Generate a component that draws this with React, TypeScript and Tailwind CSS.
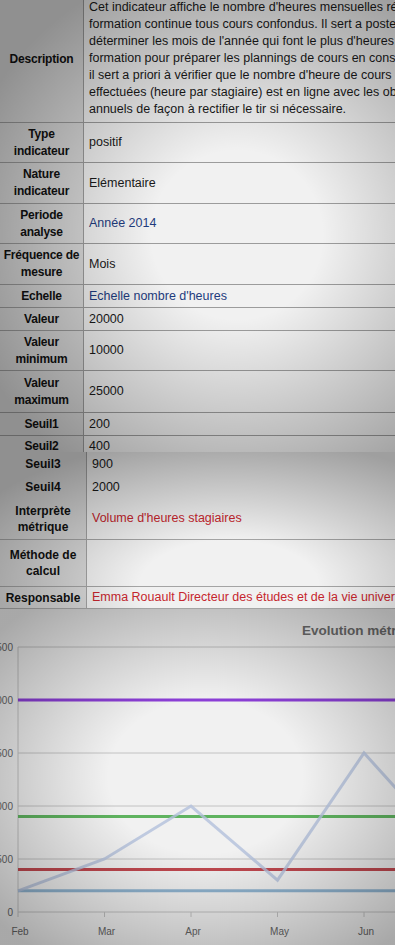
import React from "react";

type Row = { label: string[]; value: string; h: number; tone?: "link" | "red" };

const topRows: Row[] = [
  { label: ["Type", "indicateur"], value: "positif", h: 40 },
  { label: ["Nature", "indicateur"], value: "Elémentaire", h: 41 },
  { label: ["Periode", "analyse"], value: "Année 2014", h: 40, tone: "link" },
  { label: ["Fréquence de", "mesure"], value: "Mois", h: 41 },
  { label: ["Echelle"], value: "Echelle nombre d'heures", h: 23, tone: "link" },
  { label: ["Valeur"], value: "20000", h: 23 },
  { label: ["Valeur", "minimum"], value: "10000", h: 40 },
  { label: ["Valeur", "maximum"], value: "25000", h: 42 },
  { label: ["Seuil1"], value: "200", h: 23 },
];

const descLines = [
  "Cet indicateur affiche le nombre d'heures mensuelles réalisées en",
  "formation continue tous cours confondus. Il sert a posteriori à",
  "déterminer les mois de l'année qui font le plus d'heures de",
  "formation pour préparer les plannings de cours en conséquence et",
  "il sert a priori à vérifier que le nombre d'heure de cours réalisées",
  "effectuées (heure par stagiaire) est en ligne avec les objectifs",
  "annuels de façon à rectifier le tir si nécessaire.",
];

function toneClass(t?: "link" | "red") {
  if (t === "link") return "text-[#1f3c7e]";
  if (t === "red") return "text-[#c6262e]";
  return "text-[#1a1a1a]";
}

function TopRow({ r }: { r: Row }) {
  const hClass: Record<number, string> = {
    23: "h-[23px]",
    40: "h-[40px]",
    41: "h-[41px]",
    42: "h-[42px]",
  };
  return (
    <div className={`flex border-b border-[#9c9c9c] ${hClass[r.h]}`}>
      <div className="w-[84px] shrink-0 border-r border-[#9c9c9c] bg-[#dadada] flex flex-col items-center justify-center text-center text-[12px] tracking-[-0.2px] font-bold leading-[17px] text-[#111]">
        {r.label.map((l) => (
          <div key={l} className="whitespace-nowrap">{l}</div>
        ))}
      </div>
      <div className={`flex-1 flex items-center pl-[5px] whitespace-nowrap ${toneClass(r.tone)}`}>{r.value}</div>
    </div>
  );
}

type LRow = { label: string[]; value: string; h: string; border: boolean; tone?: "link" | "red" };

const lowRows: LRow[] = [
  { label: ["Seuil3"], value: "900", h: "h-[24px]", border: false },
  { label: ["Seuil4"], value: "2000", h: "h-[22px]", border: false },
  { label: ["Interprète", "métrique"], value: "Volume d'heures stagiaires", h: "h-[42px]", border: true, tone: "red" },
  { label: ["Méthode de", "calcul"], value: "", h: "h-[47px]", border: true },
  {
    label: ["Responsable"],
    value: "Emma Rouault Directeur des études et de la vie universitaire",
    h: "h-[22px]",
    border: true,
    tone: "red",
  },
];

function Chart() {
  const base = 303;
  const y = (v: number) => base - v * 0.106;
  const xs = [18, 104.5, 191, 277.5, 364, 450.5];
  const months = ["Feb", "Mar", "Apr", "May", "Jun", "Jul"];
  const data = [200, 500, 1000, 300, 1500, 600];
  const grid = [0, 500, 1000, 1500, 2000, 2500];
  const pts = data.map((v, i) => `${xs[i]},${y(v)}`).join(" ");
  return (
    <svg width="395" height="336" viewBox="0 0 395 336" className="block">
      <text x="302" y="26" fontSize="13.5" fontWeight="bold" fill="#6e6e6e" fontFamily="Liberation Sans, Arial, sans-serif">
        Evolution métrique
      </text>
      {grid.map((g) => (
        <g key={g}>
          <line x1="18" x2="395" y1={y(g)} y2={y(g)} stroke="#c2c2c2" strokeWidth="1" />
          <text x="13" y={y(g) + 3.5} fontSize="10" fill="#666" textAnchor="end" fontFamily="Liberation Sans, Arial, sans-serif">
            {g}
          </text>
        </g>
      ))}
      <line x1="18" x2="18" y1="38" y2="303" stroke="#c2c2c2" strokeWidth="1" />
      {xs.map((x, i) => (
        <g key={months[i]}>
          <line x1={x} x2={x} y1="303" y2="308" stroke="#c2c2c2" strokeWidth="1" />
          <text x={x + 2} y="326" fontSize="10" fill="#666" textAnchor="middle" fontFamily="Liberation Sans, Arial, sans-serif">
            {months[i]}
          </text>
        </g>
      ))}
      <line x1="18" x2="395" y1={y(2000)} y2={y(2000)} stroke="#8b3fd6" strokeWidth="3" />
      <line x1="18" x2="395" y1={y(900)} y2={y(900)} stroke="#5fb35f" strokeWidth="3" />
      <line x1="18" x2="395" y1={y(400)} y2={y(400)} stroke="#c0484f" strokeWidth="3" />
      <line x1="18" x2="395" y1={y(200)} y2={y(200)} stroke="#8fb3cf" strokeWidth="3" />
      <polyline points={pts} fill="none" stroke="#b3c1dc" strokeOpacity="0.8" strokeWidth="3" strokeLinejoin="miter" />
    </svg>
  );
}

export default function App() {
  return (
    <div className="w-[395px] h-[945px] overflow-hidden bg-[#f1f1f1] text-[12.5px] font-['Liberation_Sans',Arial,sans-serif]">
      {/* Section A */}
      <div className="relative h-[452px] overflow-hidden">
        <div className="-mt-[5px] w-[560px]">
          <div className="flex h-[128px] border-b border-[#9c9c9c]">
            <div className="w-[84px] shrink-0 border-r border-[#9c9c9c] bg-[#dadada] flex items-center justify-center text-[12px] tracking-[-0.2px] font-bold text-[#111]">
              Description
            </div>
            <div className="flex-1 pl-[5px] pt-[4px] leading-[17px] text-[#1a1a1a]">
              {descLines.map((l) => (
                <div key={l} className="whitespace-nowrap">{l}</div>
              ))}
            </div>
          </div>
          {topRows.map((r) => (
            <TopRow key={r.label.join(" ")} r={r} />
          ))}
          <div className="flex h-[24px]">
            <div className="w-[84px] shrink-0 border-r border-[#9c9c9c] bg-[#dadada] pt-[2px] text-center text-[12px] tracking-[-0.2px] font-bold leading-[17px] text-[#111]">
              Seuil2
            </div>
            <div className="flex-1 pl-[5px] pt-[2px] leading-[17px] text-[#1a1a1a]">400</div>
          </div>
        </div>
        <div className="pointer-events-none absolute inset-0 bg-[radial-gradient(ellipse_72%_62%_at_60%_52%,rgba(0,0,0,0)_30%,rgba(0,0,0,0.34)_100%)]" />
      </div>
      {/* Section B */}
      <div className="relative h-[157px] overflow-hidden">
        <div className="w-[560px]">
          {lowRows.map((r) => (
            <div key={r.label.join(" ")} className={`flex ${r.h} ${r.border ? "border-b border-[#a4a4a4]" : ""}`}>
              <div className="w-[87px] shrink-0 border-r border-[#a4a4a4] bg-[#dadada] flex flex-col items-center justify-center text-center text-[12px] font-bold leading-[16px] text-[#111]">
                {r.label.map((l) => (
                  <div key={l} className="whitespace-nowrap">{l}</div>
                ))}
              </div>
              <div className={`flex-1 flex items-center pl-[5px] whitespace-nowrap ${toneClass(r.tone)}`}>{r.value}</div>
            </div>
          ))}
        </div>
        <div className="pointer-events-none absolute inset-0 bg-[radial-gradient(ellipse_75%_95%_at_58%_85%,rgba(0,0,0,0)_30%,rgba(0,0,0,0.34)_100%)]" />
      </div>
      {/* Section C chart */}
      <div className="relative h-[336px] overflow-hidden">
        <Chart />
        <div className="pointer-events-none absolute inset-0 bg-[radial-gradient(ellipse_70%_65%_at_52%_50%,rgba(0,0,0,0)_35%,rgba(0,0,0,0.3)_100%)]" />
      </div>
    </div>
  );
}
